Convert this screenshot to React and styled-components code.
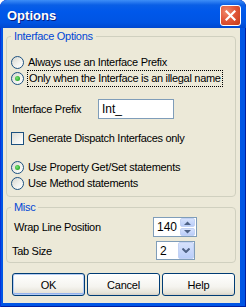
import React from 'react';
import styled, { createGlobalStyle, css } from 'styled-components';

const GlobalStyle = createGlobalStyle`
  html, body {
    margin: 0;
    padding: 0;
    background: #ffffff;
  }
  body {
    font-family: "Liberation Sans", Arial, sans-serif;
    font-size: 11px;
    letter-spacing: -0.3px;
  }
`;

// Window frame
const Window = styled.div`
  width: 246px;
  height: 307px;
  box-sizing: border-box;
  display: flex;
  flex-direction: column;
  background: #0055e5;
  padding: 0 6px 4px 3px;
  border-radius: 7px 7px 0 0;
  box-shadow: inset 1px 0 0 #0831d9, inset -1px 0 0 #001ea0, inset 0 -1px 0 #001ea0;
  overflow: hidden;
`;

const TitleBar = styled.div`
  height: 28px;
  margin: 0 -6px 0 -3px;
  padding: 0 4px 0 7px;
  display: flex;
  align-items: center;
  justify-content: space-between;
  background: linear-gradient(
    #3d8ef7 0px,
    #2a7bf0 2px,
    #0a5fe6 5px,
    #0058ea 40%,
    #0054e3 80%,
    #0048cf 100%
  );
  border-radius: 7px 7px 0 0;
`;

const Title = styled.span`
  color: #ffffff;
  font-family: "Liberation Sans", Arial, sans-serif;
  font-weight: bold;
  font-size: 13px;
  letter-spacing: 0;
  text-shadow: 1px 1px 0 #0a1e80;
  margin-top: 2px;
`;

const CloseButton = styled.div`
  width: 19px;
  height: 19px;
  margin-top: 2px;
  margin-right: 1px;
  border: 1px solid #ffffff;
  border-radius: 3px;
  background: radial-gradient(circle at 30% 30%, #f08a6c 0%, #e2583b 45%, #c43a16 100%);
  display: flex;
  align-items: center;
  justify-content: center;
`;

const Body = styled.div`
  flex: 1;
  background: #ece9d8;
  padding: 2px 4px 0 3px;
  display: flex;
  flex-direction: column;
`;

// Group boxes
const Group = styled.fieldset`
  margin: ${(p) => p.$top || 0}px 0 0 0;
  padding: 0 4px ${(p) => p.$bottom || 0}px 4px;
  border: 1px solid #d0d0bf;
  border-radius: 4px;
  min-width: 0;
  display: flex;
  flex-direction: column;
`;

const Legend = styled.legend`
  padding: 0 3px;
  color: #0046d5;
  font-size: 11px;
  line-height: 13px;
  height: 13px;
`;

const Row = styled.div`
  display: flex;
  align-items: center;
  height: ${(p) => p.$h || 16}px;
  margin-top: ${(p) => p.$mt || 0}px;
  color: #000000;
  white-space: nowrap;
`;

const Radio = styled.span`
  width: 11px;
  height: 11px;
  flex: none;
  border: 1px solid #1c5180;
  border-radius: 50%;
  background: linear-gradient(135deg, #d6d6ce 0%, #f4f4f0 60%, #ffffff 100%);
  margin-right: 4px;
  position: relative;
  ${(p) =>
    p.$checked &&
    css`
      &::after {
        content: '';
        position: absolute;
        left: 3px;
        top: 3px;
        width: 5px;
        height: 5px;
        border-radius: 50%;
        background: radial-gradient(circle at 40% 40%, #7ce27a 0%, #34b234 60%, #1f8f1f 100%);
      }
    `}
`;

const Check = styled.span`
  width: 11px;
  height: 11px;
  flex: none;
  border: 1px solid #1c5180;
  background: linear-gradient(135deg, #dcdcd5 0%, #f4f4f0 60%, #ffffff 100%);
  margin-right: 4px;
`;

const FocusText = styled.span`
  padding: 1px 1px 2px 1px;
  margin-left: -1px;
  border: 1px dotted #000000;
  width: 196px;
  box-sizing: border-box;
  line-height: 12px;
`;

const Label = styled.span`
  width: ${(p) => p.$w}px;
  padding-left: ${(p) => p.$pl || 1}px;
  flex: none;
`;

const TextBox = styled.div`
  width: ${(p) => p.$w}px;
  height: ${(p) => p.$h || 20}px;
  box-sizing: border-box;
  border: 1px solid #7f9db9;
  background: #ffffff;
  display: flex;
  align-items: center;
  padding-left: 3px;
  margin-left: ${(p) => p.$ml || 0}px;
  font-size: 12px;
  letter-spacing: 0;
  color: #000000;
`;

const Value = styled.span`
  flex: 1;
`;

const SpinCol = styled.div`
  display: flex;
  flex-direction: column;
  gap: 1px;
  margin-right: 1px;
`;

const ArrowButton = styled.div`
  width: 15px;
  height: ${(p) => p.$h || 8}px;
  border-radius: 2px;
  background: linear-gradient(#d6e2fc, #b9cdf9);
  border: 1px solid #c3d2f4;
  box-sizing: border-box;
  display: flex;
  align-items: center;
  justify-content: center;
`;

const DropButton = styled(ArrowButton)`
  width: 16px;
  height: 17px;
  margin-right: 0;
`;

// Button row
const ButtonRow = styled.div`
  display: flex;
  gap: 2px;
  margin: 10px 0 0 6px;
`;

const PushButton = styled.button`
  width: 73px;
  height: 23px;
  border: 1px solid #003c74;
  border-radius: 3px;
  background: linear-gradient(#ffffff 0%, #f5f4ef 60%, #e6e3d8 90%, #d6d0c5 100%);
  font-family: "Liberation Sans", Arial, sans-serif;
  font-size: 11px;
  letter-spacing: -0.2px;
  color: #000000;
  padding: 0;
  ${(p) =>
    p.$default &&
    css`
      box-shadow: inset 0 0 0 1px #b6cdf3, inset 0 -1px 0 1px #95b3ee;
    `}
`;

const UpArrow = () => (
  <svg width="7" height="4" viewBox="0 0 7 4">
    <path d="M0 4 L3.5 0.5 L7 4 Z" fill="#4d6185" />
  </svg>
);

const DownArrow = () => (
  <svg width="7" height="4" viewBox="0 0 7 4">
    <path d="M0 0 L3.5 3.5 L7 0 Z" fill="#4d6185" />
  </svg>
);

const Chevron = () => (
  <svg width="8" height="5" viewBox="0 0 8 5">
    <path d="M0.5 0.5 L4 4 L7.5 0.5" stroke="#4d6185" strokeWidth="2" fill="none" />
  </svg>
);

const CloseX = () => (
  <svg width="11" height="11" viewBox="0 0 11 11">
    <path d="M1.5 1.5 L9.5 9.5 M9.5 1.5 L1.5 9.5" stroke="#ffffff" strokeWidth="2.2" strokeLinecap="square" />
  </svg>
);

export default function App() {
  return (
    <>
      <GlobalStyle />
      <Window>
        <TitleBar>
          <Title>Options</Title>
          <CloseButton>
            <CloseX />
          </CloseButton>
        </TitleBar>
        <Body>
          <Group $bottom={5}>
            <Legend>Interface Options</Legend>
            <Row $mt={11}>
              <Radio />
              Always use an Interface Prefix
            </Row>
            <Row>
              <Radio $checked />
              <FocusText>Only when the Interface is an illegal name</FocusText>
            </Row>
            <Row $h={20} $mt={13}>
              <Label $w={86}>Interface Prefix</Label>
              <TextBox $w={76}>
                <Value>Int_</Value>
              </TextBox>
            </Row>
            <Row $mt={11}>
              <Check />
              Generate Dispatch Interfaces only
            </Row>
            <Row $mt={13}>
              <Radio $checked />
              Use Property Get/Set statements
            </Row>
            <Row>
              <Radio />
              Use Method statements
            </Row>
          </Group>
          <Group $top={4} $bottom={2}>
            <Legend>Misc</Legend>
            <Row $h={20} $mt={3}>
              <Label $w={139} $pl={3}>Wrap Line Position</Label>
              <TextBox $w={44}>
                <Value>140</Value>
                <SpinCol>
                  <ArrowButton $h={9}>
                    <UpArrow />
                  </ArrowButton>
                  <ArrowButton $h={8}>
                    <DownArrow />
                  </ArrowButton>
                </SpinCol>
              </TextBox>
            </Row>
            <Row $h={19} $mt={4}>
              <Label $w={144}>Tab Size</Label>
              <TextBox $w={39} $h={19}>
                <Value>2</Value>
                <DropButton>
                  <Chevron />
                </DropButton>
              </TextBox>
            </Row>
          </Group>
          <ButtonRow>
            <PushButton $default>OK</PushButton>
            <PushButton>Cancel</PushButton>
            <PushButton>Help</PushButton>
          </ButtonRow>
        </Body>
      </Window>
    </>
  );
}
